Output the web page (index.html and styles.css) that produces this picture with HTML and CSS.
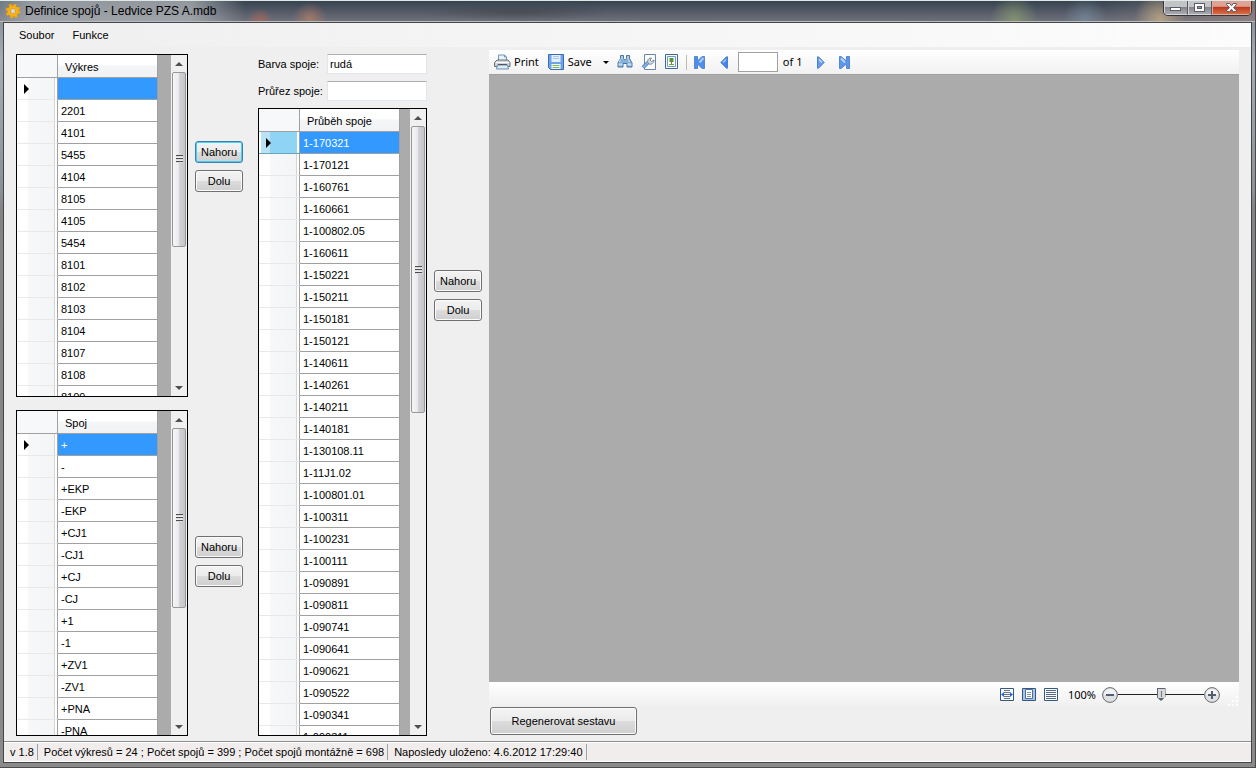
FILE: index.html
```html
<!DOCTYPE html>
<html lang="cs">
<head>
<meta charset="utf-8">
<title>Definice spojů - Ledvice PZS A.mdb</title>
<link rel="stylesheet" href="styles.css">
</head>
<body>
<div class="window">
  <header class="titlebar">
    <svg class="app-icon" width="16" height="16" viewBox="0 0 16 16" aria-hidden="true">
      <circle cx="8" cy="8" r="6.2" fill="none" stroke="#f9a800" stroke-width="2.4" stroke-dasharray="2.6 2.27"/>
      <circle cx="8" cy="8" r="4" fill="none" stroke="#fbb010" stroke-width="3"/>
      <circle cx="8" cy="8" r="2.2" fill="#ddd5c4"/>
    </svg>
    <h1 class="title">Definice spojů - Ledvice PZS A.mdb</h1>
    <div class="window-controls">
      <button class="wc" type="button" aria-label="Minimalizovat"><svg width="12" height="8" viewBox="0 0 12 8"><rect x=".5" y="3.500" width="10" height="3" fill="#fff" stroke="#5a5d68"/></svg></button>
      <button class="wc" type="button" aria-label="Maximalizovat"><svg width="12" height="10" viewBox="0 0 12 10"><rect x=".5" y=".5" width="10" height="8" fill="#fff" stroke="#5a5d68"/><rect x="3.500" y="3.500" width="4" height="2" fill="#999" stroke="#5a5d68"/></svg></button>
      <button class="wc wc-close" type="button" aria-label="Zavřít"><svg width="12" height="10" viewBox="0 0 12 10"><path d="M.7.5h3L5.500 2.800 7.300.5h3v1.200L7.600 4.600l2.700 3v1h-3L5.500 6.300 3.700 8.600h-3v-1l2.700-3L.7 1.700z" fill="#fff" stroke="#555a66"/></svg></button>
    </div>
  </header>

  <div class="client">
    <nav class="menubar">
      <button class="menu" type="button">Soubor</button>
      <button class="menu" type="button">Funkce</button>
    </nav>

    <main class="workspace">
      <div class="stack">
        <section class="pair pair-top">
          <div class="datagrid">
            <div class="viewport">
              <table class="grid">
                <thead><tr><th class="rowhead"></th><th class="colhead">Výkres</th></tr></thead>
                <tbody>
                  <tr class="selected"><th class="rowhead"><span class="marker"></span></th><td></td></tr>
                  <tr><th class="rowhead"></th><td>2201</td></tr>
                  <tr><th class="rowhead"></th><td>4101</td></tr>
                  <tr><th class="rowhead"></th><td>5455</td></tr>
                  <tr><th class="rowhead"></th><td>4104</td></tr>
                  <tr><th class="rowhead"></th><td>8105</td></tr>
                  <tr><th class="rowhead"></th><td>4105</td></tr>
                  <tr><th class="rowhead"></th><td>5454</td></tr>
                  <tr><th class="rowhead"></th><td>8101</td></tr>
                  <tr><th class="rowhead"></th><td>8102</td></tr>
                  <tr><th class="rowhead"></th><td>8103</td></tr>
                  <tr><th class="rowhead"></th><td>8104</td></tr>
                  <tr><th class="rowhead"></th><td>8107</td></tr>
                  <tr><th class="rowhead"></th><td>8108</td></tr>
                  <tr><th class="rowhead"></th><td>8109</td></tr>
                </tbody>
              </table>
            </div>
            <div class="scrollbar"><span class="arrow up"></span><div class="track"><div class="thumb" style="height:57%"><span class="grip"></span></div></div><span class="arrow down"></span></div>
          </div>
          <div class="mover">
            <button class="btn focused" type="button">Nahoru</button>
            <button class="btn" type="button">Dolu</button>
          </div>
        </section>
        <section class="pair pair-bottom">
          <div class="datagrid">
            <div class="viewport">
              <table class="grid">
                <thead><tr><th class="rowhead"></th><th class="colhead">Spoj</th></tr></thead>
                <tbody>
                  <tr class="selected"><th class="rowhead"><span class="marker"></span></th><td>+</td></tr>
                  <tr><th class="rowhead"></th><td>-</td></tr>
                  <tr><th class="rowhead"></th><td>+EKP</td></tr>
                  <tr><th class="rowhead"></th><td>-EKP</td></tr>
                  <tr><th class="rowhead"></th><td>+CJ1</td></tr>
                  <tr><th class="rowhead"></th><td>-CJ1</td></tr>
                  <tr><th class="rowhead"></th><td>+CJ</td></tr>
                  <tr><th class="rowhead"></th><td>-CJ</td></tr>
                  <tr><th class="rowhead"></th><td>+1</td></tr>
                  <tr><th class="rowhead"></th><td>-1</td></tr>
                  <tr><th class="rowhead"></th><td>+ZV1</td></tr>
                  <tr><th class="rowhead"></th><td>-ZV1</td></tr>
                  <tr><th class="rowhead"></th><td>+PNA</td></tr>
                  <tr><th class="rowhead"></th><td>-PNA</td></tr>
                </tbody>
              </table>
            </div>
            <div class="scrollbar"><span class="arrow up"></span><div class="track"><div class="thumb" style="height:62%"><span class="grip"></span></div></div><span class="arrow down"></span></div>
          </div>
          <div class="mover">
            <button class="btn" type="button">Nahoru</button>
            <button class="btn" type="button">Dolu</button>
          </div>
        </section>
      </div>

      <section class="route">
        <div class="fields">
          <label for="barva">Barva spoje:</label><input class="field" id="barva" type="text" value="rudá">
          <label for="prurez">Průřez spoje:</label><input class="field" id="prurez" type="text">
        </div>
        <div class="datagrid narrow">
          <div class="viewport">
            <table class="grid">
              <thead><tr><th class="rowhead"></th><th class="colhead">Průběh spoje</th></tr></thead>
              <tbody>
                <tr class="selected hot"><th class="rowhead"><span class="marker"></span></th><td>1-170321</td></tr>
                <tr><th class="rowhead"></th><td>1-170121</td></tr>
                <tr><th class="rowhead"></th><td>1-160761</td></tr>
                <tr><th class="rowhead"></th><td>1-160661</td></tr>
                <tr><th class="rowhead"></th><td>1-100802.05</td></tr>
                <tr><th class="rowhead"></th><td>1-160611</td></tr>
                <tr><th class="rowhead"></th><td>1-150221</td></tr>
                <tr><th class="rowhead"></th><td>1-150211</td></tr>
                <tr><th class="rowhead"></th><td>1-150181</td></tr>
                <tr><th class="rowhead"></th><td>1-150121</td></tr>
                <tr><th class="rowhead"></th><td>1-140611</td></tr>
                <tr><th class="rowhead"></th><td>1-140261</td></tr>
                <tr><th class="rowhead"></th><td>1-140211</td></tr>
                <tr><th class="rowhead"></th><td>1-140181</td></tr>
                <tr><th class="rowhead"></th><td>1-130108.11</td></tr>
                <tr><th class="rowhead"></th><td>1-11J1.02</td></tr>
                <tr><th class="rowhead"></th><td>1-100801.01</td></tr>
                <tr><th class="rowhead"></th><td>1-100311</td></tr>
                <tr><th class="rowhead"></th><td>1-100231</td></tr>
                <tr><th class="rowhead"></th><td>1-100111</td></tr>
                <tr><th class="rowhead"></th><td>1-090891</td></tr>
                <tr><th class="rowhead"></th><td>1-090811</td></tr>
                <tr><th class="rowhead"></th><td>1-090741</td></tr>
                <tr><th class="rowhead"></th><td>1-090641</td></tr>
                <tr><th class="rowhead"></th><td>1-090621</td></tr>
                <tr><th class="rowhead"></th><td>1-090522</td></tr>
                <tr><th class="rowhead"></th><td>1-090341</td></tr>
                <tr><th class="rowhead"></th><td>1-090311</td></tr>
              </tbody>
            </table>
          </div>
          <div class="scrollbar"><span class="arrow up"></span><div class="track"><div class="thumb" style="height:48.500%"><span class="grip"></span></div></div><span class="arrow down"></span></div>
        </div>
      </section>

      <div class="mover route-mover">
        <button class="btn" type="button">Nahoru</button>
        <button class="btn" type="button">Dolu</button>
      </div>

      <section class="report">
        <div class="toolbar">
          <button class="tool" type="button">
            <svg width="17" height="16" viewBox="0 0 17 16"><path d="M4.500 7V1h6l2 2v4z" fill="#e8f3fc" stroke="#6f95bd"/><path d="M10.500 1v2h2" fill="none" stroke="#6f95bd"/><path d="M.5 8.500 3 6h11l2 2.500v4H.5z" fill="#cfd2d6" stroke="#6b7077"/><path d="M2 8.500h13" stroke="#fff"/><path d="M3.500 11h10l1 4h-12z" fill="#d9ecfa" stroke="#6c8eb0"/><path d="M4 10.500h9" stroke="#555"/></svg>
            Print</button>
          <button class="tool tool-save" type="button">
            <svg width="16" height="16" viewBox="0 0 16 16"><path d="M.5.5h15v15h-13l-2-2z" fill="#6fa2e8" stroke="#3c6bb5"/><path d="M3.500 1h9v7h-9z" fill="#e4effc"/><path d="M5 2.500h6M5 4.500h6" stroke="#a9c6ec"/><path d="M3.500 10h9v5h-9z" fill="#f4faf0"/><path d="M4.500 11.500h7M4.500 13.500h7" stroke="#7cba5d"/></svg>
            Save
            <svg class="caret" width="6" height="3" viewBox="0 0 6 3"><path d="M0 0h6L3 3z" fill="#000"/></svg></button>
          <button class="tool tool-find" type="button" aria-label="Find"><svg width="16" height="16" viewBox="0 0 16 16"><path d="M3.500 1.500h3v3l1 1h1l1-1v-3h3v3l2.500 4.500v4h-5V9.500h-4V13H1V9l2.500-4.500z" fill="#86b1d6" stroke="#4a75a1"/><path d="M3.500 5.500 2.500 8M11.500 5.500l1 2.500M5 2v3M11 2v3" stroke="#d7ebfa"/><path d="M1.500 10.500h4M10.500 10.500h4" stroke="#c3def3" stroke-width="2"/></svg></button>
          <button class="tool" type="button" aria-label="Page setup"><svg width="16" height="16" viewBox="0 0 16 16"><path d="M3.500.5h11v15h-11z" fill="#fbfcfe" stroke="#6b86a8"/><path d="m2 13.500 5-5" stroke="#4373b0" stroke-width="3.500"/><path d="m2 13.500 5-5" stroke="#86b5ec" stroke-width="2"/><path d="M7 9C5.800 6.200 8 3.500 10.500 4L9 6l1.500 1.500L13 6c.3 2.500-2.500 5-5 4z" fill="#d5dae0" stroke="#7b8898"/></svg></button>
          <button class="tool" type="button" aria-label="Print layout"><svg width="14" height="16" viewBox="0 0 14 16"><path d="M.5.5h12v14H.5z" fill="#f8fbff" stroke="#41669a"/><path d="M2.500 2.500h8v10h-8z" fill="#fff" stroke="#6f9ace"/><path d="M4.500 4h4v4h-4z" fill="#4a9c30"/><path d="M6 7h1v3H6z" fill="#8a7a30"/><path d="M4 10.500h5" stroke="#64aa42"/></svg></button>
          <span class="tool-sep"></span>
          <button class="tool tool-first" type="button" aria-label="First page"><svg width="12" height="13" viewBox="0 0 12 13"><path d="M.5.5h3V5L8 .5h2.500v12H8L3.500 8v4.500h-3z" fill="#4f8ee8" stroke="#5588d4"/><path d="M9.500 2 5.500 6.500" stroke="#a9ccfa" stroke-width="2"/></svg></button>
          <button class="tool" type="button" aria-label="Previous page"><svg width="8" height="13" viewBox="0 0 8 13"><path d="M7.500.8v11.400h-1L.8 6.500 6.500.8z" fill="#4286ec" stroke="#4a7fd0"/><path d="M6 3.500 3 6.500" stroke="#a9ccfa" stroke-width="1.500"/></svg></button>
          <input class="page-input" type="text" aria-label="Page">
          <span class="page-total">of 1</span>
          <button class="tool tool-next" type="button" aria-label="Next page"><svg width="8" height="13" viewBox="0 0 8 13"><path d="M.5.8v11.400h1l5.700-5.700L1.500.8z" fill="#659cf0" stroke="#4a7fd0"/><path d="m2 3.500 3 3" stroke="#c0dafc" stroke-width="1.500"/></svg></button>
          <button class="tool" type="button" aria-label="Last page"><svg width="12" height="13" viewBox="0 0 12 13"><path d="M11.500.5h-3V5L3 .5H1.500v12H3L8.500 8v4.500h3z" fill="#5c95ea" stroke="#5588d4"/><path d="M3 2.500 7 6.500" stroke="#bad6fc" stroke-width="2"/></svg></button>
        </div>
        <div class="canvas"></div>
        <div class="zoombar">
          <button class="tool" type="button" aria-label="Page width"><svg width="14" height="13" viewBox="0 0 14 13"><path d="M.5.5h13v12H.5z" fill="#f8fbff" stroke="#35577f"/><path d="M4 2.500h6M4 4.500h6M4 8.500h6M4 10.500h6" stroke="#67747f"/><path d="M3 6.500h8" stroke="#67747f"/><path d="M1 6.500 4 4v5zM13 6.500 10 4v5z" fill="#2e67dd"/></svg></button>
          <button class="tool" type="button" aria-label="Whole page"><svg width="14" height="13" viewBox="0 0 14 13"><path d="M.5.5h13v12H.5z" fill="#a9c4e6" stroke="#35577f"/><path d="M3.500 1.500h7v9h-7z" fill="#fff" stroke="#4a6e9e"/><path d="M5 4.500h4M5 6.500h4M5 8.500h4" stroke="#8192a8"/></svg></button>
          <button class="tool" type="button" aria-label="Full size"><svg width="14" height="13" viewBox="0 0 14 13"><path d="M.5.5h13v12H.5z" fill="#f8fbff" stroke="#35577f"/><path d="M2 2.500h10M2 4.500h10M2 6.500h10M2 8.500h10M2 10.500h10" stroke="#56677c"/></svg></button>
          <label class="zoom-value" for="zoom">100%</label>
          <div class="zoom">
            <button class="tool" type="button" aria-label="Zoom out"><svg width="16" height="16" viewBox="0 0 16 16"><circle cx="8" cy="8" r="7.400" fill="#dfe0e2" stroke="#686b70"/><path d="M2 8a6 6 0 0 1 12 0z" fill="#f3f3f4"/><path d="M4 8h8" stroke="#4f5e70" stroke-width="2"/></svg></button>
            <input class="slider" id="zoom" type="range" min="0" max="100" value="50">
            <button class="tool" type="button" aria-label="Zoom in"><svg width="16" height="16" viewBox="0 0 16 16"><circle cx="8" cy="8" r="7.400" fill="#dfe0e2" stroke="#686b70"/><path d="M2 8a6 6 0 0 1 12 0z" fill="#f3f3f4"/><path d="M4 8h8M8 4v8" stroke="#4f5e70" stroke-width="2"/></svg></button>
          </div>
          <svg class="sizegrip" width="11" height="11" viewBox="0 0 11 11"><path d="M8 0h2v2H8zM4 4h2v2H4zM8 4h2v2H8zM0 8h2v2H0zM4 8h2v2H4zM8 8h2v2H8z" fill="#fff"/></svg>
        </div>
        <button class="btn btn-regen" type="button">Regenerovat sestavu</button>
      </section>
    </main>

    <footer class="statusbar">
      <span class="status">v 1.8</span>
      <span class="status">Počet výkresů = 24 ; Počet spojů = 399 ; Počet spojů montážně = 698</span>
      <span class="status">Naposledy uloženo: 4.6.2012 17:29:40</span>
    </footer>
  </div>
</div>
</body>
</html>
```
FILE: styles.css
```css
* { box-sizing: border-box; }
body { margin: 0; height: 100vh; overflow: hidden; font: 11px/14px "Liberation Sans", Arial, sans-serif; color: #000; }
button, input { font: inherit; color: inherit; }
svg { display: block; flex: none; }

.window { display: flex; flex-direction: column; height: 100%; padding: 0 3px 4px; background: linear-gradient(#7d8790 0, #a5adb5 60px, #8b9196 190px, #828384 210px, #8a8a8a 100%); border-right: 1px solid #4a4a4a; border-bottom: 1px solid #4c4c4c; }
.titlebar { display: flex; flex: none; align-items: center; gap: 4px; height: 22px; margin: 0 -3px; padding: 0 3px 0 5px; border-top: 1px solid #dfe7e7; border-bottom: 1px solid #b9bbbd;
  background:
    linear-gradient(90deg, rgba(150,156,162,.6), rgba(176,180,184,.75) 30px, rgba(176,180,184,.75) 190px, rgba(176,180,184,0) 245px),
    radial-gradient(circle 13px at 260px 20px, rgba(190,100,80,.6), transparent),
    radial-gradient(circle 17px at 310px 18px, rgba(200,130,100,.6), transparent),
    radial-gradient(ellipse 95px 9px at 518px 11px, rgba(55,60,62,.45), transparent),
    radial-gradient(circle 24px at 1014px 18px, rgba(140,160,110,.7), transparent),
    radial-gradient(circle 22px at 1085px 18px, rgba(120,145,165,.6), transparent),
    radial-gradient(circle 26px at 1160px 18px, rgba(200,175,135,.75), transparent),
    linear-gradient(90deg, transparent 88%, rgba(160,140,135,.6)),
    linear-gradient(#364450, #535966 50%, #6e7079); }
.title { flex: 1; margin: 0; font-size: 12px; font-weight: 400; }
.window-controls { display: flex; align-self: flex-start; border: 1px solid #34363a; border-top: 0; border-radius: 0 0 5px 5px; overflow: hidden; }
.wc { display: grid; place-items: center; width: 24px; height: 14px; padding: 0; border: 1px solid #d4d5d8; border-top: 0; border-right-color: #55575c; background: linear-gradient(#c3c4c6 45%, #85868b 50%, #a9abb0); }
.wc-close { width: 39px; border-color: #e5a896; background: linear-gradient(#dfa394 40%, #bd3b20 50%, #d76d45); }

.client { display: flex; flex: 1; flex-direction: column; min-height: 0; border: 1px solid #444648; background: #efefef; }
.menubar { display: flex; flex: none; gap: 18px; height: 24px; padding: 0 15px; background: linear-gradient(90deg, #efefef, #fcfcfc); }
.menu { padding: 0; border: 0; background: none; }

.workspace { display: flex; flex: 1; min-height: 0; padding: 0 12px 5px; }
.stack { display: flex; flex: none; flex-direction: column; gap: 13px; padding-top: 7px; }
.pair { display: flex; gap: 7px; min-height: 0; }
.pair-top { flex: 343 1 0; }
.pair-bottom { flex: 326 1 0; }
.mover { display: flex; flex: none; flex-direction: column; gap: 7px; width: 48px; padding-top: 87px; }
.pair-bottom .mover { padding-top: 126px; }
.route { display: flex; flex: none; flex-direction: column; gap: 7px; margin-left: 15px; padding-top: 7px; }
.route-mover { margin-left: 7px; padding-top: 223px; }
.fields { display: grid; flex: none; grid-template-columns: 69px 100px; gap: 7px 0; align-items: center; }
.fields label { white-space: nowrap; }
.field { width: 100%; height: 20px; padding: 0 2px; border: 1px solid #e2e6ee; border-top-color: #abadb3; border-radius: 1px; background: #fff; }

.btn { height: 22px; padding: 0; border: 1px solid #707070; border-radius: 3px; background: linear-gradient(#f3f3f3, #ebebeb 50%, #dcdcdc 50%, #cfcfcf); box-shadow: inset 0 0 0 1px #fbfbfb; }
.focused { border-color: #3c7fb1; box-shadow: inset 0 0 0 1px #45d0f8; }

.datagrid { display: flex; flex: none; width: 172px; min-height: 0; border: 1px solid #000; background: #ababab; }
.narrow { flex: 1; width: 169px; }
.viewport { flex: 1; min-width: 0; min-height: 0; overflow: hidden; }
.grid { width: 141px; table-layout: fixed; border-collapse: separate; border-spacing: 0; background: #fff; }
.grid th, .grid td { height: 22px; padding: 0 3px; border-right: 1px solid #a0a0a0; border-bottom: 1px solid #a0a0a0; text-align: left; font-weight: 400; white-space: nowrap; }
.grid .rowhead { width: 41px; padding: 0 7px; border-bottom-color: #e8e9eb; background: linear-gradient(90deg, #fff 11px, #f7f8fa 11px, #f4f5f7 37px, #d5d5d5 37px, #d5d5d5 38px, #fff 38px); }
.grid thead th { height: 23px; background: linear-gradient(#fff 45%, #f4f5f7 50%, #f1f2f4); }
.grid thead .rowhead { border-bottom-color: #a0a0a0; background: #f7f8fa; }
.grid .colhead { padding: 2px 0 0 7px; }
.grid .selected td { background: #3399ff; color: #fff; }
.grid .hot .rowhead { background: linear-gradient(90deg, #fff 2px, #b9e2f5 2px, #b9e2f5 11px, #8fd4f5 11px, #8fd4f5 38px, #fff 38px); border-bottom-color: #68a5c0; }
.marker { display: block; width: 0; height: 0; border: solid transparent; border-width: 5px 0 5px 5px; border-left-color: #000; }

.scrollbar { display: flex; flex: none; flex-direction: column; width: 16px; padding-right: 1px; background: #f0f0f0; }
.arrow { display: grid; flex: none; place-items: center; height: 17px; }
.arrow::before { content: ""; border: solid transparent; border-width: 0 4px 4px; border-bottom-color: #505050; }
.down::before { border-width: 4px 4px 0; border-top-color: #505050; }
.track { flex: 1; min-height: 0; }
.thumb { display: grid; place-items: center; margin: 0 0 0 1px; border: 1px solid #979797; border-radius: 2px; background: linear-gradient(90deg, #f5f5f5, #ebebed 45%, #d2d2d6 55%, #c4c5ca); }
.grip { width: 7px; height: 8px; background: repeating-linear-gradient(#4c4c4c 0, #4c4c4c 1px, #d5d5d5 1px, #f5f5f5 3px); }

.report { display: flex; flex: 1; flex-direction: column; min-width: 0; margin-left: 7px; padding: 3px 0 1px; font-family: "Noto Sans", sans-serif; }
.toolbar { display: flex; flex: none; align-items: center; gap: 8px; height: 24px; padding-left: 5px; background: linear-gradient(#fff, #f1f1f1); }
.tool { display: flex; align-items: center; gap: 3px; padding: 0; border: 0; background: none; }
.tool-save { margin-left: 1px; gap: 4px; }
.caret { margin-left: 7px; }
.tool-sep { width: 1px; height: 15px; margin: 0 -1px; background: #bdbbb3; }
.tool-first { margin-right: 6px; }
.page-input { width: 40px; height: 20px; margin-left: 2px; padding: 0 3px; border: 1px solid #a0a0a0; background: #fff; }
.page-total { margin-left: -3px; }
.tool-next { margin: 0 5px 0 7px; }
.canvas { flex: 1; background: #ababab; border-top: 1px solid #9f9f9f; }
.zoombar { display: flex; flex: none; align-items: center; justify-content: flex-end; gap: 8px; height: 25px; background: linear-gradient(#fff, #efefef); }
.zoom-value { margin-left: 2px; }
.zoom { display: flex; align-items: center; margin-left: -2px; }
.slider { width: 86px; height: 13px; margin: 0; appearance: none; background: linear-gradient(#222, #222) center / 100% 1px no-repeat; }
.slider::-webkit-slider-thumb { appearance: none; width: 9px; height: 13px; background: linear-gradient(90deg, transparent 4px, #777 4px, #777 5px, transparent 5px) center / 100% 6px no-repeat, linear-gradient(90deg, #5b6470 1px, #d5d7da 1px, #d5d7da 8px, #5b6470 8px); border-top: 1px solid #5b6470; border-bottom: 3px solid #5b6470; clip-path: polygon(0 0, 100% 0, 100% 70%, 50% 100%, 0 70%); }
.sizegrip { align-self: flex-end; }
.btn-regen { flex: none; align-self: flex-start; width: 147px; height: 28px; margin-left: 1px; font-family: "Liberation Sans", Arial, sans-serif; }

.statusbar { display: flex; flex: none; align-items: center; height: 21px; border-top: 1px solid #8f8f8f; border-bottom: 1px solid #fff; box-shadow: inset 0 1px #fff; background: #f1edec; }
.status { padding: 1px 3px 1px 6px; border-right: 1px solid #a0a0a0; white-space: nowrap; }
```
